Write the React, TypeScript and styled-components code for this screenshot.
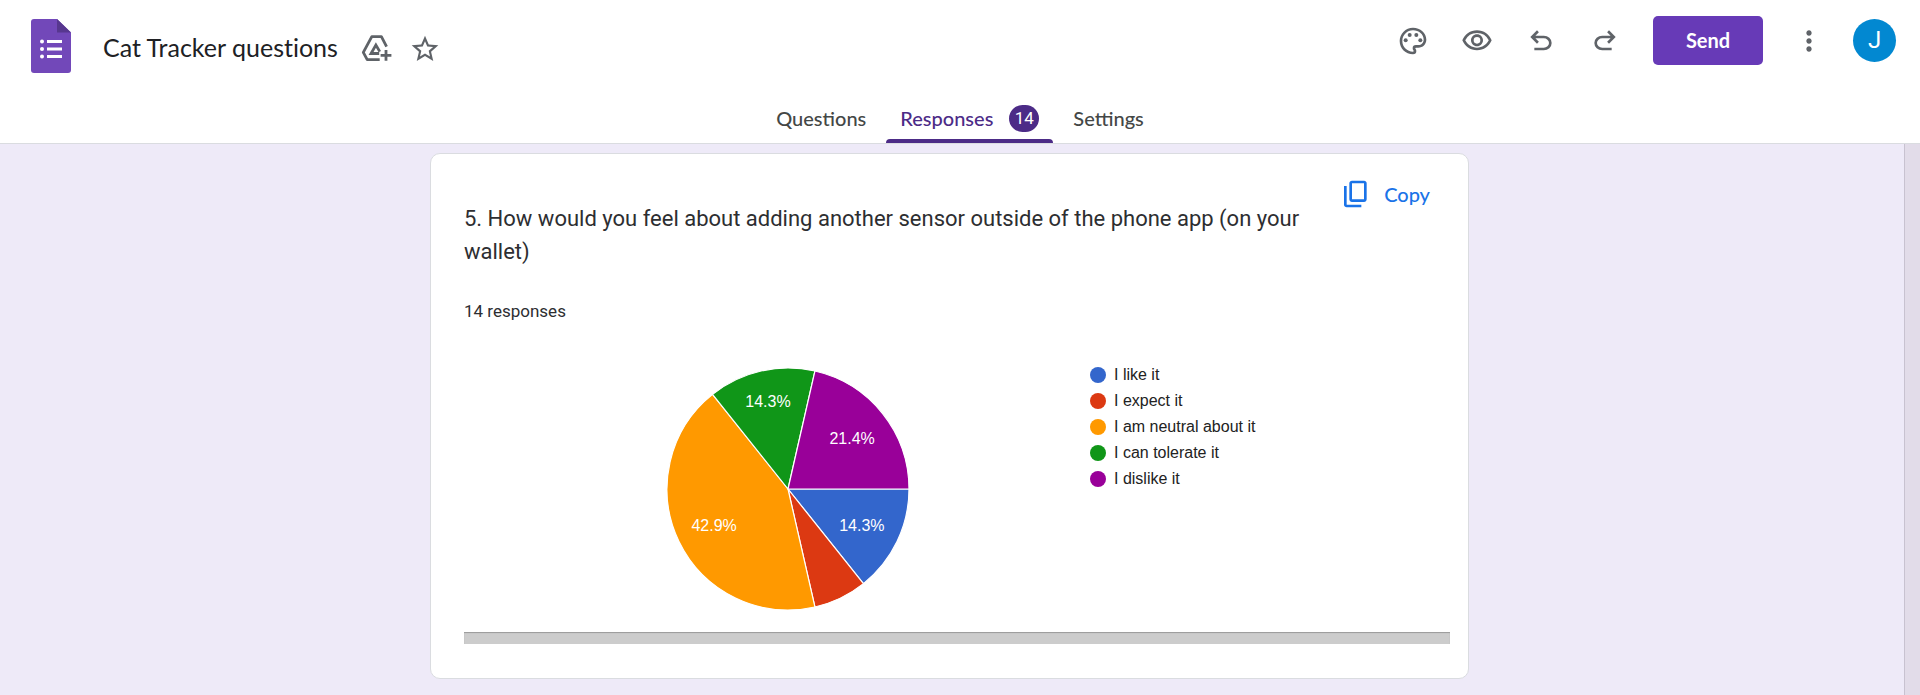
import React from "react";
import styled, { createGlobalStyle } from "styled-components";
import {
  MdStarOutline,
  MdOutlinePalette,
  MdOutlineVisibility,
  MdMoreVert,
} from "react-icons/md";

const brandFont = `Lato, "Open Sans", sans-serif`;
const bodyFont = `Roboto, "Noto Sans", sans-serif`;
const chartFont = `"Liberation Sans", Arial, sans-serif`;

const GlobalStyle = createGlobalStyle`
  *, *::before, *::after { box-sizing: border-box; }
  html, body, #root { height: 100%; }
  body { margin: 0; background: #eeeaf8; font-family: ${bodyFont}; color: #2d2e31; overflow: hidden; }
`;

const Page = styled.div`
  display: flex;
  flex-direction: column;
  height: 100%;
`;

const Header = styled.header`
  display: flex;
  flex-direction: column;
  flex: none;
  background: #fff;
  border-bottom: 1px solid #dadce0;
`;

const TopBar = styled.div`
  display: flex;
  justify-content: space-between;
  align-items: flex-start;
  height: 95px;
  padding: 16px 24px 0 31px;
`;

const DocumentInfo = styled.div`
  display: flex;
  align-items: center;
  padding-top: 3px;
`;

const HomeLink = styled.a`
  display: flex;
  margin-right: 32px;
`;

const Title = styled.h1`
  margin: 0 15px 0 0;
  padding-top: 2px;
  color: #202124;
  font: 400 25px/32px ${brandFont};
  font-variant-ligatures: none;
`;

const TitleActions = styled.div`
  display: flex;
  padding-top: 5px;
`;

const Actions = styled.div`
  display: flex;
  align-items: center;
`;

const IconButton = styled.button<{ $width?: number }>`
  display: flex;
  align-items: center;
  justify-content: center;
  width: ${(p) => p.$width ?? 64}px;
  height: 48px;
  padding: 0;
  border: 0;
  background: none;
  color: #5f6368;
  cursor: pointer;
`;

const SendButton = styled.button`
  width: 110px;
  height: 49px;
  margin: 0 14px 0 16px;
  padding: 0 0 2px;
  border: 0;
  border-radius: 5px;
  background: #673ab7;
  color: #fff;
  font: 700 20px/24px ${brandFont};
  cursor: pointer;
`;

const Avatar = styled.button`
  width: 43px;
  height: 43px;
  margin-left: 12px;
  padding: 0;
  border: 0;
  border-radius: 50%;
  background: #0288d1;
  color: #fff;
  font: 400 24px/43px ${bodyFont};
  cursor: pointer;
`;

const Tabs = styled.nav`
  display: flex;
  justify-content: center;
  gap: 6px;
`;

const Tab = styled.a<{ $active?: boolean }>`
  display: flex;
  align-items: center;
  gap: 16px;
  position: relative;
  height: 48px;
  padding: 0 14px 2px;
  color: ${(p) => (p.$active ? "#4c2b87" : "#444746")};
  font: 500 20px/24px ${brandFont};
  text-decoration: none;

  &::after {
    content: "";
    display: ${(p) => (p.$active ? "block" : "none")};
    position: absolute;
    left: 0;
    right: 0;
    bottom: 0;
    height: 4px;
    border-radius: 4px 4px 0 0;
    background: #4c2b87;
  }
`;

const CountBadge = styled.span`
  width: 30px;
  height: 27px;
  border-radius: 14px;
  background: #4c2b87;
  color: #fff;
  font: 400 17px/26px ${bodyFont};
  text-align: center;
`;

const Workspace = styled.div`
  display: flex;
  flex: 1;
  min-height: 0;
`;

const Content = styled.main`
  display: flex;
  flex-direction: column;
  align-items: center;
  gap: 16px;
  flex: 1;
  min-height: 0;
  overflow: hidden;
  padding: 9px 5px 0 0;
`;

const ScrollTrack = styled.div`
  width: 16px;
  border-left: 1px solid #c8c2d0;
  background: #e2dce9;
`;

const Card = styled.section`
  flex: none;
  width: 100%;
  max-width: 1039px;
  min-height: 60px;
  border: 1px solid #dadce0;
  border-radius: 10px;
  background: #fff;
`;

const QuestionCard = styled(Card)`
  padding: 24px 18px 34px 33px;
`;

const QuestionHeader = styled.div`
  display: flex;
  align-items: flex-start;
  justify-content: space-between;
`;

const Question = styled.h2`
  flex: 1;
  max-width: 860px;
  margin: 0;
  padding-top: 24px;
  font: 400 22px/33px ${bodyFont};
`;

const CopyButton = styled.button`
  display: flex;
  align-items: center;
  gap: 12px;
  margin-right: 20px;
  padding: 0;
  border: 0;
  background: none;
  color: #1a73e8;
  font: 500 20px/30px ${brandFont};
  cursor: pointer;
`;

const ResponseCount = styled.p`
  margin: 31px 0 0;
  font: 400 17px/24px ${bodyFont};
`;

const Chart = styled.figure`
  display: flex;
  align-items: flex-start;
  justify-content: space-between;
  margin: 45px 192px 22px 203px;
`;

const Legend = styled.ul`
  width: 168px;
  margin: -6px 0 0;
  padding: 0;
  list-style: none;
  color: #222;
  font: 400 16px/26px ${chartFont};
`;

const LegendItem = styled.li<{ $color: string }>`
  display: flex;
  align-items: center;
  gap: 8px;
  white-space: nowrap;

  &::before {
    content: "";
    width: 16px;
    height: 16px;
    border-radius: 50%;
    background: ${(p) => p.$color};
  }
`;

const PieLabel = styled.text`
  fill: #fff;
  font: 400 16px ${chartFont};
  text-anchor: middle;
`;

const Strip = styled.div`
  height: 12px;
  background: #ccc;
  box-shadow: inset 0 1px 1px #999;
`;

const answers = [
  { label: "I like it", count: 2, color: "#3366cc", labelRadius: 82 },
  { label: "I expect it", count: 1, color: "#dc3912", labelRadius: 82 },
  { label: "I am neutral about it", count: 6, color: "#ff9900", labelRadius: 82 },
  { label: "I can tolerate it", count: 2, color: "#109618", labelRadius: 90 },
  { label: "I dislike it", count: 3, color: "#990099", labelRadius: 82 },
];

const total = answers.reduce((sum, a) => sum + a.count, 0);
const RADIUS = 121;

function point(fraction: number, r: number) {
  const angle = fraction * Math.PI * 2;
  return [RADIUS + r * Math.cos(angle), RADIUS + r * Math.sin(angle)];
}

function PieChart() {
  let start = 0;
  return (
    <svg width="242" height="242" viewBox="0 0 242 242" role="img" aria-label="Responses by answer" overflow="visible">
      {answers.map((a) => {
        const from = start / total;
        start += a.count;
        const to = start / total;
        const [x1, y1] = point(from, RADIUS);
        const [x2, y2] = point(to, RADIUS);
        const [lx, ly] = point((from + to) / 2, a.labelRadius);
        return (
          <g key={a.label}>
            <path
              d={`M${RADIUS} ${RADIUS}L${x1} ${y1}A${RADIUS} ${RADIUS} 0 0 1 ${x2} ${y2}Z`}
              fill={a.color}
              stroke="#fff"
              strokeWidth="1.2"
            />
            {a.count > 1 && (
              <PieLabel x={lx} y={ly + 6}>
                {((a.count / total) * 100).toFixed(1)}%
              </PieLabel>
            )}
          </g>
        );
      })}
    </svg>
  );
}

function FormsLogo() {
  return (
    <svg width="40" height="54" viewBox="0 0 40 54" aria-hidden="true">
      <path d="M3 0H26L40 13.500V51a3 3 0 0 1-3 3H3a3 3 0 0 1-3-3V3a3 3 0 0 1 3-3Z" fill="#7248b9" />
      <path d="M26 0 40 13.500H26Z" fill="#57378f" />
      <g fill="#fff">
        <circle cx="11" cy="22.500" r="2" />
        <circle cx="11" cy="30" r="2" />
        <circle cx="11" cy="37.500" r="2" />
        <path d="M16 21h15v3H16zM16 28.500h15v3H16zM16 36h15v3H16z" />
      </g>
    </svg>
  );
}

function DriveAddIcon() {
  return (
    <svg width="32" height="32" viewBox="0 0 32 32" fill="none" stroke="currentColor" strokeWidth="2.800" aria-hidden="true">
      <path d="M18.700 26.700H6.200L2.300 19.300 10.800 3.700H20.400L25.600 13.600" strokeLinejoin="round" />
      <path d="M18.200 20.500H10L14.900 12 18.800 18.600" />
      <path d="M25 17V27.800M19.600 22.400H30.400" />
    </svg>
  );
}

function CopyIcon() {
  return (
    <svg width="32" height="32" viewBox="0 -960 960 960" fill="currentColor" aria-hidden="true">
      <path d="M360-240q-33 0-56.500-23.500T280-320v-480q0-33 23.500-56.500T360-880h360q33 0 56.500 23.500T800-800v480q0 33-23.500 56.500T720-240H360Zm0-80h360v-480H360v480ZM200-80q-33 0-56.500-23.500T120-160v-560h80v560h440v80H200Z" />
    </svg>
  );
}

function UndoIcon({ flipped = false }: { flipped?: boolean }) {
  return (
    <svg width="32" height="32" viewBox="0 -960 960 960" fill="currentColor" aria-hidden="true">
      <path
        transform={flipped ? "translate(960 0) scale(-1 1)" : undefined}
        d="M280-200v-80h284q63 0 109.500-40T720-420q0-60-46.500-100T564-560H312l104 104-56 56-200-200 200-200 56 56-104 104h252q97 0 166.500 63T800-420q0 94-69.500 157T564-200H280Z"
      />
    </svg>
  );
}

export default function App() {
  return (
    <Page>
      <GlobalStyle />
      <Header>
        <TopBar>
          <DocumentInfo>
            <HomeLink href="#home" aria-label="Forms home">
              <FormsLogo />
            </HomeLink>
            <Title>Cat Tracker questions</Title>
            <TitleActions>
              <IconButton $width={48} aria-label="Add to Drive">
                <DriveAddIcon />
              </IconButton>
              <IconButton $width={48} aria-label="Star">
                <MdStarOutline size={32} />
              </IconButton>
            </TitleActions>
          </DocumentInfo>
          <Actions>
            <IconButton aria-label="Customize theme">
              <MdOutlinePalette size={32} />
            </IconButton>
            <IconButton aria-label="Preview">
              <MdOutlineVisibility size={32} />
            </IconButton>
            <IconButton aria-label="Undo">
              <UndoIcon />
            </IconButton>
            <IconButton aria-label="Redo">
              <UndoIcon flipped />
            </IconButton>
            <SendButton>Send</SendButton>
            <IconButton aria-label="More">
              <MdMoreVert size={32} />
            </IconButton>
            <Avatar aria-label="Account: J">J</Avatar>
          </Actions>
        </TopBar>
        <Tabs>
          <Tab href="#questions">Questions</Tab>
          <Tab href="#responses" $active aria-current="page">
            Responses <CountBadge>14</CountBadge>
          </Tab>
          <Tab href="#settings">Settings</Tab>
        </Tabs>
      </Header>
      <Workspace>
        <Content>
          <QuestionCard>
            <QuestionHeader>
              <Question>
                5. How would you feel about adding another sensor outside of the phone app (on your wallet)
              </Question>
              <CopyButton>
                <CopyIcon />
                Copy
              </CopyButton>
            </QuestionHeader>
            <ResponseCount>14 responses</ResponseCount>
            <Chart>
              <PieChart />
              <Legend>
                {answers.map((a) => (
                  <LegendItem key={a.label} $color={a.color}>
                    {a.label}
                  </LegendItem>
                ))}
              </Legend>
            </Chart>
            <Strip />
          </QuestionCard>
          <Card />
        </Content>
        <ScrollTrack />
      </Workspace>
    </Page>
  );
}
